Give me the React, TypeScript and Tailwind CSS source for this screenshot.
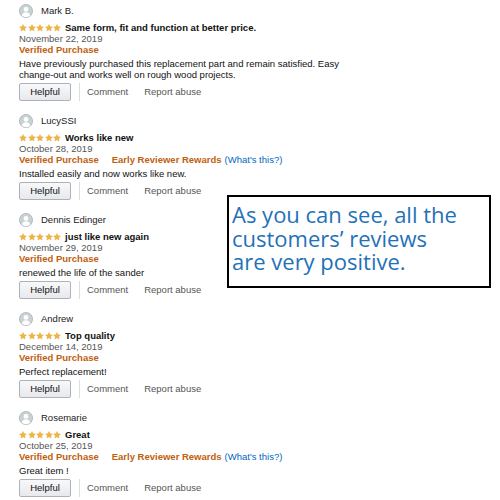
import React from "react";

type Review = {
  name: string;
  title: string;
  date: string;
  early?: boolean;
  body: string[];
};

const reviews: Review[] = [
  {
    name: "Mark B.",
    title: "Same form, fit and function at better price.",
    date: "November 22, 2019",
    body: [
      "Have previously purchased this replacement part and remain satisfied. Easy",
      "change-out and works well on rough wood projects.",
    ],
  },
  {
    name: "LucySSI",
    title: "Works like new",
    date: "October 28, 2019",
    early: true,
    body: ["Installed easily and now works like new."],
  },
  {
    name: "Dennis Edinger",
    title: "just like new again",
    date: "November 29, 2019",
    body: ["renewed the life of the sander"],
  },
  {
    name: "Andrew",
    title: "Top quality",
    date: "December 14, 2019",
    body: ["Perfect replacement!"],
  },
  {
    name: "Rosemarie",
    title: "Great",
    date: "October 25, 2019",
    early: true,
    body: ["Great item !"],
  },
];

function Avatar() {
  return (
    <svg width="14" height="14" viewBox="0 0 14 14">
      <circle cx="7" cy="7" r="6.6" fill="#c9d1d3" stroke="#9aa5a8" strokeWidth="0.6" />
      <circle cx="7" cy="5.4" r="2.4" fill="#ffffff" />
      <path d="M2.8 11.6 C3.4 8.9 5 8.2 7 8.2 C9 8.2 10.6 8.9 11.2 11.6 C10 12.7 8.6 13.3 7 13.3 C5.4 13.3 4 12.7 2.8 11.6 Z" fill="#ffffff" />
    </svg>
  );
}

function Star() {
  return (
    <svg width="8" height="8" viewBox="0 0 24 24">
      <path
        d="M12 1.5l3.1 6.6 7.2.9-5.3 5 1.4 7.1L12 17.6 5.6 21.1 7 14l-5.3-5 7.2-.9z"
        fill="#f2b43c"
        stroke="#d89a22"
        strokeWidth="1"
      />
    </svg>
  );
}

function ReviewBlock({ r }: { r: Review }) {
  return (
    <div className="flex flex-col">
      <div className="flex items-center h-[16px] gap-[8px]">
        <Avatar />
        <span className="text-[9.5px] text-[#222]">{r.name}</span>
      </div>
      <div className="flex items-center mt-[3px] h-[11px] leading-[11px]">
        <div className="flex gap-[0.5px] mr-[4px]">
          <Star />
          <Star />
          <Star />
          <Star />
          <Star />
        </div>
        <span className="font-bold text-[9.5px] text-[#111]">{r.title}</span>
      </div>
      <div className="h-[11px] leading-[11px] text-[9.5px] text-[#555]">{r.date}</div>
      <div className="h-[11px] leading-[11px] text-[9.5px] flex">
        <span className="font-bold text-[#c0600f]">Verified Purchase</span>
        {r.early && (
          <>
            <span className="font-bold text-[#c0600f] ml-[13px]">Early Reviewer Rewards</span>
            <span className="text-[#0066c0] ml-[3px]">(What's this?)</span>
          </>
        )}
      </div>
      <div className="mt-[3px] text-[9.5px] leading-[11px] text-[#111]">
        {r.body.map((l, i) => (
          <div key={i}>{l}</div>
        ))}
      </div>
      <div className="flex items-center mt-[3px] h-[18px] text-[9.5px]">
        <div className="w-[52px] h-[18px] flex items-center justify-center rounded-[2px] border border-[#adb1b8] bg-gradient-to-b from-[#f7f8fa] to-[#e7e9ec] text-[#111]">
          Helpful
        </div>
        <div className="w-px h-[18px] bg-[#ddd] ml-[8px]" />
        <span className="ml-[7px] text-[#555]">Comment</span>
        <span className="ml-[16px] text-[#555]">Report abuse</span>
      </div>
    </div>
  );
}

export default function App() {
  return (
    <div
      className="relative w-[500px] h-[500px] bg-white overflow-hidden"
      style={{ fontFamily: '"Liberation Sans", Arial, sans-serif' }}
    >
      <div className="flex flex-col gap-[12px] pl-[19px] pt-[3px]">
        {reviews.map((r, i) => (
          <ReviewBlock key={i} r={r} />
        ))}
      </div>
      <div
        className="absolute left-[227px] top-[195px] w-[264px] h-[93px] border-2 border-black bg-white pl-[3px] pt-[6px] text-[22px] leading-[23.5px] text-[#1f72b8] whitespace-nowrap"
        style={{ fontFamily: '"Open Sans", sans-serif' }}
      >
        As you can see, all the
        <br />
        customers’ reviews
        <br />
        are very positive.
      </div>
    </div>
  );
}
